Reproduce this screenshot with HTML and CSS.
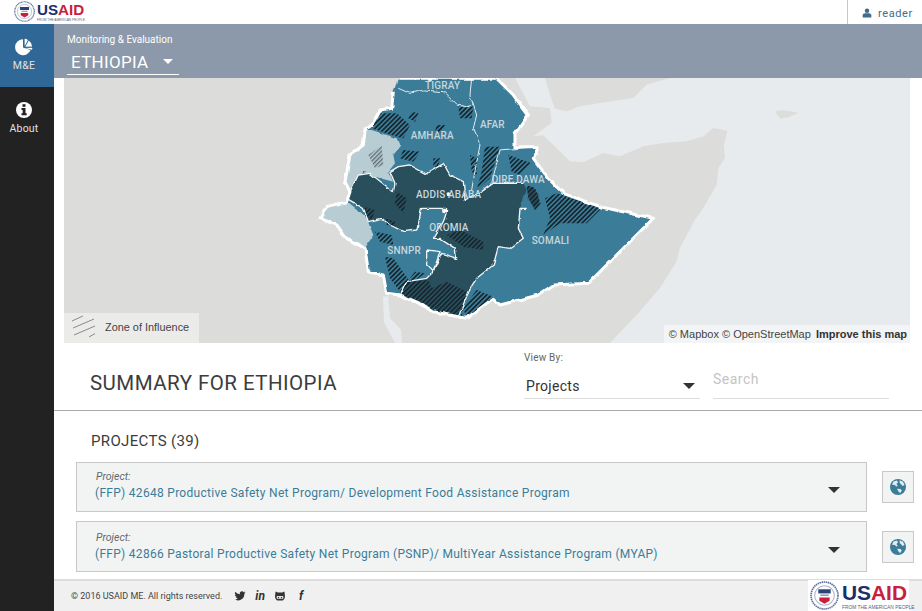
FILE: index.html
```html
<!DOCTYPE html>
<html lang="en">
<head>
    <meta charset="UTF-8">
    <meta name="viewport" content="width=device-width, initial-scale=1.0">
    <title>USAID Monitoring &amp; Evaluation - Ethiopia</title>
    <link rel="stylesheet" href="styles.css">
</head>
<body>
    <header class="topbar">
        <div class="logo logo-small">
            <svg class="seal" viewBox="0 0 28 28">
                <circle cx="14" cy="14" r="13" fill="#fff" stroke="#5d6f9c" stroke-width="1.6" stroke-dasharray="1.4 .6"/>
                <circle cx="14" cy="14" r="9.500" fill="#fff" stroke="#a9b3c9" stroke-width="1"/>
                <rect x="8" y="8" width="12" height="4" fill="#27457c"/>
                <rect x="10" y="13" width="8" height="1.500" fill="#9a9a9a"/>
                <path d="M9 16h10v3l-5 3-5-3z" fill="#c8203c"/>
            </svg>
            <div class="logo-text">
                <div class="logo-name"><span class="us">US</span><span class="aid">AID</span></div>
                <div class="logo-sub">FROM THE AMERICAN PEOPLE</div>
            </div>
        </div>
        <div class="user">
            <svg class="user-icon" viewBox="0 0 12 12"><circle cx="6" cy="3.200" r="2.700" fill="#3f6d8e"/><path d="M.8 11.500V9c0-1.800 1.200-2.800 3-2.800h4.400c1.800 0 3 1 3 2.800v2.500z" fill="#3f6d8e"/></svg>
            <span>reader</span>
        </div>
    </header>

    <div class="app">
        <nav class="sidebar">
            <a class="nav-item active">
                <svg class="nav-icon" viewBox="0 0 18 18">
                    <path d="M8 1.200A8 8 0 1 0 15.600 12L8 9.600z" fill="#fff"/>
                    <path d="M9.600.8v7.400l3.300-6.300A8 8 0 0 0 9.600.8z" fill="#fff"/>
                    <path d="M13.800 2.500 10.300 8.800l6.800-.2a8 8 0 0 0-3.300-6.100z" fill="#fff"/>
                    <path d="M10.200 10l6.800 1.800a8 8 0 0 0 .3-2.100z" fill="#fff"/>
                </svg>
                <span>M&amp;E</span>
            </a>
            <a class="nav-item">
                <svg class="nav-icon" viewBox="0 0 18 18">
                    <circle cx="9" cy="9" r="8" fill="#fff"/>
                    <rect x="7.500" y="3.200" width="3" height="2.600" fill="#222"/>
                    <path d="M6.500 7h4v5.300h1.200v2H6.500v-2h1.200V9H6.500z" fill="#222"/>
                </svg>
                <span>About</span>
            </a>
        </nav>

        <div class="content">
            <div class="subheader">
                <div class="subheader-label">Monitoring &amp; Evaluation</div>
                <div class="country-select">
                    <span>ETHIOPIA</span>
                    <i class="caret caret-white"></i>
                </div>
            </div>

            <div class="scroll">
                <div class="map">
                    <svg class="map-svg" viewBox="64 78 846 265">
                        <defs>
                            <pattern id="hatch" width="10" height="10" patternUnits="userSpaceOnUse" patternTransform="rotate(-45)">
                                <rect width="10" height="5" fill="#14252d"/>
                            </pattern>
                            <pattern id="hatchGrey" width="9" height="9" patternUnits="userSpaceOnUse" patternTransform="rotate(-45)">
                                <rect width="9" height="4" fill="#5f6b70"/>
                            </pattern>
                            <!-- roughens the hand-traced borders and softens them a little -->
                            <filter id="rough" x="-5%" y="-5%" width="110%" height="110%">
                                <feTurbulence type="fractalNoise" baseFrequency=".035" numOctaves="3" seed="4" result="noise"/>
                                <feDisplacementMap in="SourceGraphic" in2="noise" scale="11" xChannelSelector="R" yChannelSelector="G"/>
                                <feGaussianBlur stdDeviation="1"/>
                            </filter>
                            <filter id="soft" x="-5%" y="-5%" width="110%" height="110%">
                                <feGaussianBlur stdDeviation=".8"/>
                            </filter>
                        </defs>
                        <rect x="64" y="78" width="846" height="265" fill="#dcdcda"/>
                        <!-- water, traced in a 3x crop of the right half -->
                        <g transform="translate(500 78) scale(.33333)">
                            <path class="water" d="M45 0 90 85 150 90 155 135 100 175 130 172 210 250 250 252 310 225 360 235 430 205 490 195 560 190 610 175 640 150 682 158 672 200 675 240 655 270 650 320 610 390 585 425 540 510 530 550 480 630 420 700 330 795H1230V0H510L440 20 400 60 300 75 240 85 200 100 165 92 150 50 135 0z"/>
                            <path class="land" d="M825 100 845 97 870 100 895 105 865 118 840 122z"/>
                        </g>
                        <path class="water" d="M383 297 388 296 390 318 401 330 402 343H395L384 322z"/>

                        <g transform="translate(300 75) scale(.33333)">
                            <g filter="url(#rough)">
                                <path class="country" d="M295 10H590L640 60 685 120 645 175 645 215 715 215 700 250 745 310 790 355 900 395 1060 430 865 625 760 630 715 660 600 690 580 670 500 730 475 725 400 710 370 690 300 660 260 655 250 600 205 590 195 520 140 490 110 450 60 430 80 395 140 380 150 350 135 320 150 240 190 210 195 165 215 150 240 105 275 100 280 50z"/>
                                <path class="light" d="M195 165 215 165 290 190 300 215 280 240 285 265 265 290 280 320 240 310 190 290 155 350 135 320 150 240 190 210z"/>
                                <path class="light" d="M60 430 80 395 140 380 200 430 220 480 195 520 140 490 110 450z"/>
                                <path class="dark" d="M140 370 175 300 210 295 280 350 285 325 270 290 295 275 330 270 375 295 430 265 450 300 490 320 495 375 545 350 580 325 670 325 680 345 660 400 655 460 670 490 630 520 595 515 580 570 530 610 510 640 475 725 400 710 370 690 300 660 320 620 380 610 400 590 425 535 470 550 465 520 420 490 400 490 430 440 440 410 425 400 365 400 350 465 310 470 270 450 245 430 205 440 190 400z"/>
                                <path class="dark" d="M680 335 705 340 722 385 705 405 685 370z"/>
                            </g>

                            <g filter="url(#soft)">
                                <path class="hatch" d="M215 160 235 115 290 115 330 150 310 190 290 185z"/>
                                <path class="hatch" d="M555 215 600 215 570 310 530 345 545 290z"/>
                                <path class="hatch" d="M625 240 695 265 660 300 635 290z"/>
                                <path class="hatch" d="M735 370 770 355 905 400 860 445 780 445 730 480 750 430z"/>
                                <path class="hatch" d="M440 480 480 465 550 500 550 525 490 515z"/>
                                <path class="hatch" d="M475 95 520 95 515 130 480 130z"/>
                                <path class="hatch" d="M300 660 320 620 385 615 395 640 440 620 500 650 485 725 400 710 370 690z"/>
                                <path class="hatch" d="M490 700 530 645 580 665 500 730z"/>
                                <path class="hatch" d="M255 545 280 550 330 620 300 650 270 610z"/>
                                <path class="hatch" d="M680 330 705 340 722 385 705 405 685 370z"/>
                                <path class="hatch" d="M290 350 320 370 310 415 285 385z"/>
                                <path class="hatch" d="M310 225 360 230 340 260 300 250z"/>
                                <path class="hatch" d="M510 240 530 250 530 300 515 290z"/>
                                <path class="hatch" d="M335 110 355 115 345 140 325 130z"/>
                                <path class="hatch" d="M410 150 435 150 420 175 405 170z"/>
                                <path class="hatch" d="M190 395 225 405 215 435 195 420z"/>
                                <path class="hatch" d="M255 430 285 440 285 455 260 450z"/>
                                <path class="hatch" d="M225 470 275 480 280 510 240 500z"/>
                                <path class="hatch" d="M345 590 375 595 340 620 330 610z"/>
                                <path class="hatch" d="M400 250 420 250 415 275 400 275z"/>
                                <path class="hatch" d="M205 240 245 212 250 270 225 280z" style="fill:url(#hatchGrey)"/>
                            </g>

                            <g filter="url(#rough)">
                                <path class="inner" d="M295 40 330 55 370 45 430 50 470 90 500 95 520 90"/>
                                <path class="inner" d="M515 10 510 60 530 120 520 160 540 210 530 260 515 345"/>
                                <path class="inner" d="M600 225 715 215M600 225 575 325"/>
                                <path class="border-thin" d="M140 370 175 300 210 295 280 350 285 325 270 290 295 275 330 270 375 295 430 265 450 300 490 320 495 375 545 350 580 325 670 325"/>
                                <path class="border-thin" d="M680 400 660 400 655 460 670 490 630 520 595 515 580 570 530 610 510 640 475 725"/>
                                <path class="border-thin" d="M300 660 320 620 380 610 400 590 425 535 470 550 465 520 420 490 400 490 430 440 440 410 425 400 365 400 350 465 310 470 270 450 245 430 205 440 190 400 140 370"/>
                                <path class="border-thin" d="M380 525 420 530 400 590 380 570z"/>
                                <path class="outline" d="M295 10H590L640 60 685 120 645 175 645 215 715 215 700 250 745 310 790 355 900 395 1060 430 865 625 760 630 715 660 600 690 580 670 500 730 475 725 400 710 370 690 300 660 260 655 250 600 205 590 195 520 140 490 110 450 60 430 80 395 140 380 150 350 135 320 150 240 190 210 195 165 215 150 240 105 275 100 280 50"/>
                                <circle cx="445" cy="358" r="6" fill="#fff"/>
                                <circle cx="433" cy="408" r="7" fill="#fff"/>
                            </g>

                            <text class="region" x="375" y="41">TIGRAY</text>
                            <text class="region" x="540" y="160">AFAR</text>
                            <text class="region" x="332" y="193">AMHARA</text>
                            <text class="region" x="348" y="370">ADDIS ABABA</text>
                            <text class="region" x="575" y="325">DIRE DAWA</text>
                            <text class="region" x="388" y="468">OROMIA</text>
                            <text class="region" x="695" y="508">SOMALI</text>
                            <text class="region" x="262" y="538">SNNPR</text>
                        </g>
                    </svg>
                    <div class="legend">
                        <svg class="legend-icon" viewBox="0 0 24 24">
                            <path d="M1 6 12 1M2 13 23 4M3 20 24 11M18 22 25 18" stroke="#8a8a8a" stroke-width="1" fill="none"/>
                        </svg>
                        <span>Zone of Influence</span>
                    </div>
                    <div class="attribution">© Mapbox © OpenStreetMap <b>Improve this map</b></div>
                </div>

                <div class="summary">
                    <h1>SUMMARY FOR ETHIOPIA</h1>
                    <div class="filters">
                        <div class="view-by">
                            <label>View By:</label>
                            <div class="view-select">
                                <span>Projects</span>
                                <i class="caret caret-dark"></i>
                            </div>
                        </div>
                        <div class="search">Search</div>
                    </div>
                </div>

                <section class="projects">
                    <h2>PROJECTS (39)</h2>

                    <div class="project-row">
                        <div class="project-card">
                            <div>
                                <div class="project-label">Project:</div>
                                <a class="project-name">(FFP) 42648 Productive Safety Net Program/ Development Food Assistance Program</a>
                            </div>
                            <i class="caret caret-dark"></i>
                        </div>
                        <button class="globe-btn">
                            <svg viewBox="0 0 18 18">
                                <circle cx="9" cy="9" r="8" fill="#3b7c98"/>
                                <path d="M4.500 3.500 8 2.400 9 4.200 7.500 6 8.800 8 7 8.500 6 7 3 6.800zM10.500 2.200 14 3.800 15.500 7 13.500 8 12.300 6.500 10.800 5zM8 10.800 11.500 11 12.800 12.500 11.300 15 9.800 14z" fill="#e4ecef"/>
                            </svg>
                        </button>
                    </div>

                    <div class="project-row">
                        <div class="project-card">
                            <div>
                                <div class="project-label">Project:</div>
                                <a class="project-name">(FFP) 42866 Pastoral Productive Safety Net Program (PSNP)/ MultiYear Assistance Program (MYAP)</a>
                            </div>
                            <i class="caret caret-dark"></i>
                        </div>
                        <button class="globe-btn">
                            <svg viewBox="0 0 18 18">
                                <circle cx="9" cy="9" r="8" fill="#3b7c98"/>
                                <path d="M4.500 3.500 8 2.400 9 4.200 7.500 6 8.800 8 7 8.500 6 7 3 6.800zM10.500 2.200 14 3.800 15.500 7 13.500 8 12.300 6.500 10.800 5zM8 10.800 11.500 11 12.800 12.500 11.300 15 9.800 14z" fill="#e4ecef"/>
                            </svg>
                        </button>
                    </div>
                </section>
            </div>

            <footer class="footer">
                <span class="copyright">© 2016 USAID ME. All rights reserved.</span>
                <div class="social">
                    <svg class="social-icon" viewBox="0 0 24 24"><path d="M23 4.900c-.8.400-1.700.6-2.600.8.900-.6 1.600-1.400 2-2.500-.9.500-1.900.9-2.900 1.100A4.500 4.500 0 0 0 11.700 8.400 12.800 12.800 0 0 1 2.400 3.700a4.500 4.500 0 0 0 1.400 6c-.7 0-1.400-.2-2-.6 0 2.200 1.500 4.100 3.600 4.500-.7.200-1.400.2-2 .1.600 1.800 2.300 3.100 4.200 3.100A9 9 0 0 1 1 18.700 12.800 12.800 0 0 0 20.700 7.300c.9-.6 1.700-1.400 2.300-2.400z" fill="#333"/></svg>
                    <span class="social-text">in</span>
                    <svg class="social-icon" viewBox="0 0 24 24"><path d="M3 3 7.500 5h9L21 3l.5 6c1 3 .5 11-5 12h-9c-5.500-1-6-9-5-12z" fill="#333"/><path d="M5.500 12h13v5.500h-13z" fill="#f0f0f0"/><circle cx="9" cy="14.800" r="1.500" fill="#333"/><circle cx="15" cy="14.800" r="1.500" fill="#333"/></svg>
                    <span class="social-text social-f">f</span>
                </div>
                <div class="logo logo-large">
                    <svg class="seal" viewBox="0 0 28 28">
                        <circle cx="14" cy="14" r="13" fill="#fff" stroke="#5d6f9c" stroke-width="1.6" stroke-dasharray="1.4 .6"/>
                        <circle cx="14" cy="14" r="9.500" fill="#fff" stroke="#a9b3c9" stroke-width="1"/>
                        <rect x="8" y="8" width="12" height="4" fill="#27457c"/>
                        <rect x="10" y="13" width="8" height="1.500" fill="#9a9a9a"/>
                        <path d="M9 16h10v3l-5 3-5-3z" fill="#c8203c"/>
                    </svg>
                    <div class="logo-text">
                        <div class="logo-name"><span class="us">US</span><span class="aid">AID</span></div>
                        <div class="logo-sub">FROM THE AMERICAN PEOPLE</div>
                    </div>
                </div>
            </footer>
        </div>
    </div>
</body>
</html>
```

FILE: styles.css
```css
* {
    box-sizing: border-box;
}

html, body {
    height: 100%;
}

body {
    margin: 0;
    overflow: hidden;
    display: flex;
    flex-direction: column;
    background-color: #fff;
    color: #3c3c3c;
    font-family: Roboto, "Liberation Sans", sans-serif;
}

/* top bar */
.topbar {
    height: 24px;
    flex: none;
    display: flex;
    justify-content: space-between;
    background-color: #fff;
}

.logo {
    display: flex;
    align-items: center;
    background-color: #fff;
}

.seal {
    flex: none;
}

.logo-name {
    font-family: "Liberation Sans", sans-serif;
    font-weight: bold;
    line-height: normal;
}

.us {
    color: #1b2f6b;
}

.aid {
    color: #c8203c;
}

.logo-sub {
    font-family: "Liberation Sans", sans-serif;
    color: #54608a;
    white-space: nowrap;
}

.logo-small {
    padding: 1px 0 2px 14px;
}

.logo-small .seal {
    width: 21px;
    height: 21px;
    margin-right: 2px;
}

.logo-small .logo-name {
    font-size: 15.200px;
}

.logo-small .logo-sub {
    font-size: 3.200px;
    line-height: 4px;
}

.user {
    width: 75px;
    display: flex;
    align-items: center;
    padding-left: 14px;
    padding-top: 2px;
    border-left: 1px solid #c8c8c8;
    color: #3f6d8e;
    font-size: 11px;
    letter-spacing: .6px;
}

.user-icon {
    width: 10px;
    height: 10px;
    margin-right: 6px;
}

/* layout */
.app {
    flex: 1;
    display: flex;
    min-height: 0;
}

.sidebar {
    width: 54px;
    flex: none;
    background-color: #222;
}

.nav-item {
    display: flex;
    flex-direction: column;
    align-items: center;
    height: 63px;
    padding: 14px 6px 0 0;
    color: #e0e0e0;
    font-size: 10.500px;
    letter-spacing: .2px;
}

.nav-item.active {
    background-color: #2f6796;
}

.nav-icon {
    width: 18px;
    height: 18px;
    margin-bottom: 3px;
}

.content {
    flex: 1;
    min-width: 0;
    display: flex;
    flex-direction: column;
}

/* grey band with the country picker */
.subheader {
    height: 54px;
    flex: none;
    padding: 10px 0 0 13px;
    background-color: #8c99ab;
    color: #fff;
}

.subheader-label {
    font-size: 10px;
    line-height: 12px;
}

.country-select {
    width: 112px;
    height: 26px;
    margin-top: 3px;
    padding-left: 4px;
    display: flex;
    align-items: center;
    justify-content: space-between;
    padding-right: 6px;
    border-bottom: 1px solid #fff;
    font-size: 17px;
    letter-spacing: .3px;
}

.caret {
    display: block;
    width: 0;
    height: 0;
    border-style: solid;
    border-color: transparent;
    border-width: 6px 6.500px 0;
}

.caret-white {
    border-width: 5px 5px 0;
    border-top-color: #fff;
}

.caret-dark {
    border-top-color: #333;
}

.scroll {
    flex: 1;
    min-height: 0;
    overflow: hidden;
}

/* map */
.map {
    position: relative;
    height: 265px;
    margin: 0 12px 0 10px;
}

.map-svg {
    display: block;
    width: 846px;
    height: 265px;
}

.water {
    fill: #e8ebee;
}

.land {
    fill: #dcdcda;
}

.country {
    fill: #3b7c98;
}

.light {
    fill: #b7ccd3;
}

.dark {
    fill: #2b4f5c;
}

.hatch {
    fill: url(#hatch);
}

.inner {
    fill: none;
    stroke: #e4ecef;
    stroke-width: 3;
}

.border-thin {
    fill: none;
    stroke: #f2f5f6;
    stroke-width: 4;
    stroke-linejoin: round;
}

.outline {
    fill: none;
    stroke: #fff;
    stroke-width: 9;
    stroke-linejoin: round;
}

.region {
    fill: #c8d6dc;
    font-family: Roboto, sans-serif;
    font-size: 30px;
    font-weight: 500;
    letter-spacing: .5px;
}

.legend {
    position: absolute;
    left: 0;
    bottom: 0;
    width: 135px;
    height: 30px;
    display: flex;
    align-items: center;
    padding: 0 0 2px 7px;
    background-color: #ebebea;
    color: #444;
    font-family: "Liberation Sans", sans-serif;
    font-size: 10.900px;
}

.legend-icon {
    width: 24px;
    height: 24px;
    margin-right: 10px;
}

.attribution {
    position: absolute;
    right: 0;
    bottom: 0;
    height: 18px;
    padding: 0 3px 0 5px;
    background-color: #f2f4f5;
    color: #444;
    font-family: "Liberation Sans", sans-serif;
    font-size: 11px;
    line-height: 18px;
    white-space: nowrap;
}

.attribution b {
    margin-left: 2px;
    color: #333;
}

/* summary row */
.summary {
    height: 68px;
    display: flex;
    justify-content: space-between;
    padding: 0 33px 0 36px;
    border-bottom: 1px solid #aaa;
}

.summary h1 {
    margin: 28px 0 0;
    font-size: 20.500px;
    line-height: 24px;
    font-weight: 400;
    letter-spacing: .45px;
    color: #3c3c3c;
}

.filters {
    display: flex;
    gap: 13px;
}

.view-by {
    width: 176px;
    height: 56px;
    border-bottom: 1px solid #ddd;
}

.view-by label {
    display: block;
    margin-top: 9px;
    font-size: 10px;
    line-height: 12px;
    letter-spacing: .2px;
    color: #666;
}

.view-select {
    display: flex;
    align-items: center;
    justify-content: space-between;
    margin-top: 13px;
    padding: 0 5px 0 2px;
    font-size: 14px;
    line-height: 18px;
    letter-spacing: .3px;
    color: #333;
}

.search {
    width: 176px;
    height: 56px;
    padding-top: 28px;
    border-bottom: 1px solid #ddd;
    color: #c4c4c4;
    font-size: 14px;
    line-height: 16px;
    letter-spacing: .5px;
}

/* project list */
.projects {
    padding: 21px 8px 0 22px;
}

.projects h2 {
    margin: 0 0 12px 15px;
    font-size: 15px;
    line-height: 18px;
    font-weight: 400;
    letter-spacing: .35px;
    color: #3c3c3c;
}

.project-row {
    display: flex;
    align-items: center;
    gap: 15px;
    margin-bottom: 9px;
}

.project-card {
    width: 791px;
    height: 50px;
    display: flex;
    align-items: center;
    justify-content: space-between;
    padding: 0 26px 2px 18px;
    background-color: #f2f4f4;
    border: 1px solid #c8c8c8;
}

.project-row:last-child .project-card {
    height: 51px;
    padding-bottom: 0;
}

.project-card .caret {
    margin-top: 7px;
}

.project-label {
    margin: 0 0 3px 1px;
    font-size: 10.500px;
    line-height: 12px;
    font-style: italic;
    color: #666;
}

.project-name {
    display: block;
    font-size: 12px;
    line-height: 15px;
    letter-spacing: .29px;
    color: #3b7c98;
}

.globe-btn {
    width: 32px;
    height: 32px;
    flex: none;
    padding: 6px 7px;
    background-color: #f2f4f4;
    border: 1px solid #c8c8c8;
}

.globe-btn svg {
    display: block;
    width: 18px;
    height: 18px;
    margin-left: -1px;
}

/* footer */
.footer {
    position: relative;
    height: 32px;
    flex: none;
    display: flex;
    align-items: center;
    padding-left: 17px;
    background-color: #f0f0f0;
    border-top: 2px solid #ddd;
}

.copyright {
    font-size: 9px;
    color: #444;
}

.social {
    display: flex;
    align-items: center;
    gap: 9px;
    margin-left: 12px;
}

.social-icon {
    width: 12px;
    height: 12px;
}

.social-text {
    font-size: 12px;
    line-height: 12px;
    font-weight: bold;
    font-style: italic;
    color: #333;
}

.social-f {
    margin-left: 4px;
}

.logo-large {
    position: absolute;
    right: 13px;
    top: -1px;
    width: 101px;
    height: 31px;
    padding-left: 2px;
}

.logo-large .seal {
    width: 29px;
    height: 29px;
    margin-right: 3px;
}

.logo-large .logo-name {
    font-size: 20.900px;
}

.logo-large .logo-sub {
    font-size: 4.850px;
    line-height: 6px;
}
```
